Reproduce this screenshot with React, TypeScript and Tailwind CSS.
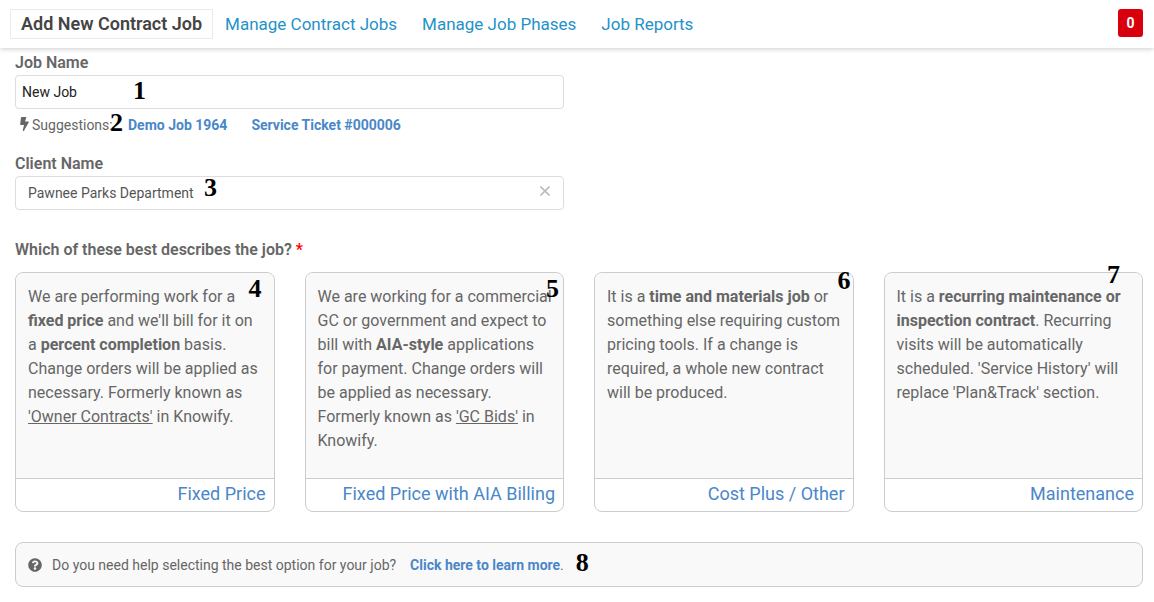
import type { ReactNode } from "react";
import { FaBolt, FaQuestionCircle } from "react-icons/fa";
import { clsx } from "clsx";

const TABS = ["Manage Contract Jobs", "Manage Job Phases", "Job Reports"];

const SUGGESTIONS = ["Demo Job 1964", "Service Ticket #000006"];

const JOB_TYPES: {
  title: string;
  step: string;
  stepClass: string;
  body: ReactNode;
}[] = [
  {
    title: "Fixed Price",
    step: "4",
    stepClass: "top-1 right-3",
    body: (
      <>
        We are performing work for a <b>fixed price</b> and we'll bill for it on
        a&nbsp;<b>percent completion</b> basis. Change orders will be applied as
        necessary. Formerly known as <u>'Owner Contracts'</u> in Knowify.
      </>
    ),
  },
  {
    title: "Fixed Price with AIA Billing",
    step: "5",
    stepClass: "top-1 right-1",
    body: (
      <>
        We are working for a commercial GC or government and expect to bill with{" "}
        <b>AIA-style</b> applications for payment. Change orders will be applied
        as necessary. Formerly known as <u>'GC Bids'</u> in Knowify.
      </>
    ),
  },
  {
    title: "Cost Plus / Other",
    step: "6",
    stepClass: "-top-1 right-0.5",
    body: (
      <>
        It is a <b>time and materials job</b> or something else requiring custom
        pricing tools. If a change is required, a whole new contract will be
        produced.
      </>
    ),
  },
  {
    title: "Maintenance",
    step: "7",
    stepClass: "-top-2.5 right-5.5",
    body: (
      <>
        It is a <b>recurring maintenance or inspection contract</b>. Recurring
        visits will be automatically scheduled. 'Service History' will replace
        'Plan&amp;Track' section.
      </>
    ),
  },
];

function Step({ n, className }: { n: string; className?: string }) {
  return (
    <span
      className={clsx(
        "font-['Liberation_Serif',serif] text-[26px] leading-6 font-bold text-black",
        className,
      )}
    >
      {n}
    </span>
  );
}

function Header() {
  return (
    <header className="flex h-12 items-center justify-between pr-[11px] pl-2.5 shadow-[0_1px_5px_rgba(0,0,0,0.2)]">
      <nav className="flex items-center text-[17px] leading-7">
        <a
          href="#add"
          aria-current="page"
          className="mr-3 border border-[#ebebeb] px-2.5 text-lg leading-7 font-semibold text-[#444]"
        >
          Add New Contract Job
        </a>
        <div className="flex gap-[25px]">
          {TABS.map((tab) => (
            <a key={tab} href="#tab" className="text-[#2492c8]">
              {tab}
            </a>
          ))}
        </div>
      </nav>
      <button
        type="button"
        aria-label="Notifications"
        className="mb-0.5 h-7 w-[25px] rounded-[3px] bg-[#d9000d] text-sm font-bold text-white"
      >
        0
      </button>
    </header>
  );
}

export default function App() {
  return (
    <div className="min-h-screen bg-white font-[Roboto,sans-serif] text-[#666]">
      <Header />

      <main className="pt-[3px] pr-[11px] pb-4 pl-[15px]">
        <div className="grid grid-cols-2 gap-[30px]">
          <div>
            <label htmlFor="job" className="block leading-6 font-semibold">
              Job Name
            </label>
            <div className="relative">
              <input
                id="job"
                defaultValue="New Job"
                className="block h-[34px] w-full rounded border border-[#ddd] px-1.5 text-sm text-[#222] outline-none"
              />
              <Step n="1" className="absolute top-1 left-[118px]" />
            </div>
            <div className="relative flex h-[43px] items-start pt-1.5 pl-1 text-sm leading-5">
              <FaBolt className="mt-0.5 mr-0.5 h-3.5 w-[11px]" aria-hidden />
              <span>Suggestions:</span>
              <Step n="2" className="absolute top-0.5 left-[95px]" />
              <div className="absolute left-[113px] flex gap-6 font-bold text-[#4a87c9]">
                {SUGGESTIONS.map((name) => (
                  <a key={name} href="#suggestion">
                    {name}
                  </a>
                ))}
              </div>
            </div>

            <label htmlFor="client" className="block leading-6 font-semibold">
              Client Name
            </label>
            <div className="relative">
              <input
                id="client"
                defaultValue="Pawnee Parks Department"
                className="block h-[34px] w-full rounded border border-[#ddd] px-3 text-sm text-[#555] outline-none"
              />
              <Step n="3" className="absolute top-0 left-[189px]" />
              <button
                type="button"
                aria-label="Clear client"
                className="absolute top-2.5 right-3.5 text-[#bbb]"
              >
                <svg viewBox="0 0 10 10" className="size-2.5">
                  <path
                    d="M0.5 0.5 9.5 9.5M9.5 0.5 0.5 9.5"
                    stroke="currentColor"
                    strokeWidth="1.6"
                  />
                </svg>
              </button>
            </div>
          </div>
        </div>

        <h2 className="mt-7 mb-2.5 leading-6 font-semibold">
          Which of these best describes the job?{" "}
          <span className="text-[#f00]">*</span>
        </h2>

        <div className="grid grid-cols-4 gap-[30px]">
          {JOB_TYPES.map((type) => (
            <section
              key={type.title}
              className="relative flex flex-col rounded-lg border border-[#ccc]"
            >
              <p className="min-h-[205px] flex-1 rounded-t-lg bg-[#f9f9f9] pt-3 pr-2 pl-3 leading-6">
                {type.body}
              </p>
              <a
                href="#type"
                className="border-t border-[#ccc] px-2 pt-px pb-[3px] text-right text-lg leading-7 text-[#4a87c9]"
              >
                {type.title}
              </a>
              <Step n={type.step} className={clsx("absolute", type.stepClass)} />
            </section>
          ))}
        </div>

        <div className="mt-[30px] flex h-[45px] items-center rounded-lg border border-[#ccc] bg-[#f9f9f9] px-3 text-sm">
          <FaQuestionCircle className="mr-2.5 size-3.5" aria-hidden />
          <span>Do you need help selecting the best option for your job?</span>
          <span className="ml-3.5">
            <a href="#learn" className="font-bold text-[#4a87c9]">
              Click here to learn more
            </a>
            .
          </span>
          <Step n="8" className="mb-1 ml-3" />
        </div>
      </main>
    </div>
  );
}
